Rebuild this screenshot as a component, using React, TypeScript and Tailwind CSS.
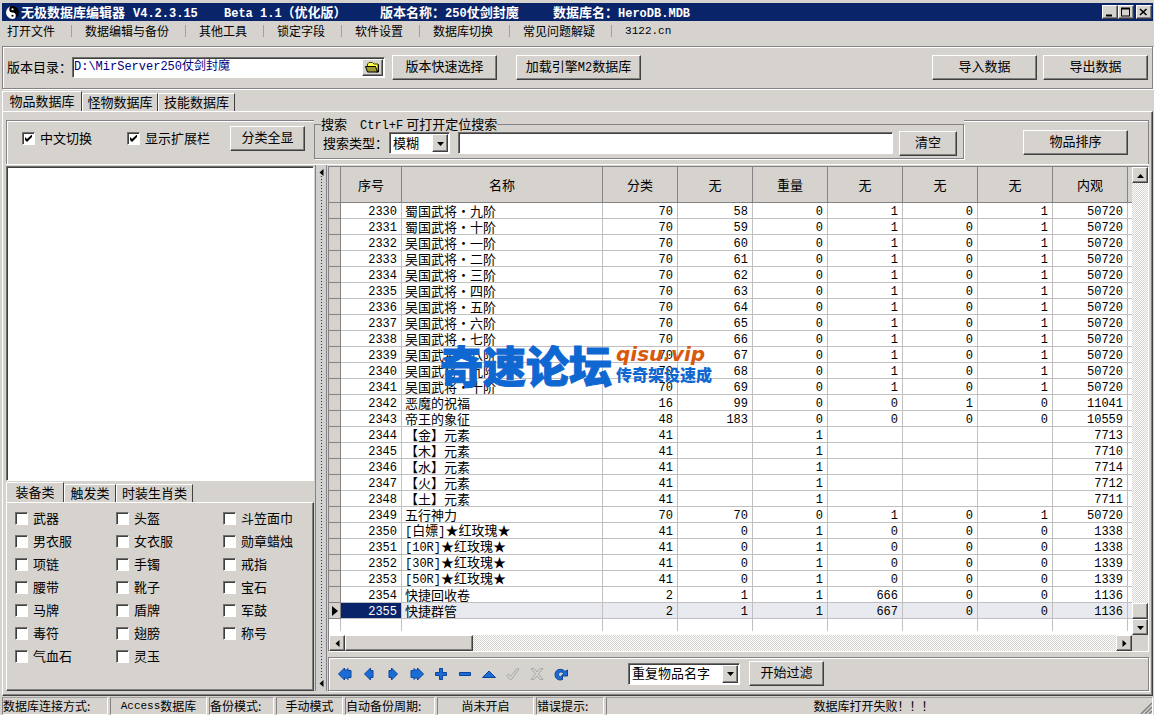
import type { ButtonHTMLAttributes, ReactNode } from 'react'
import clsx from 'clsx'

const RAISED =
  'border border-t-white border-l-white border-r-[#404040] border-b-[#404040] shadow-[inset_-1px_-1px_0_#808080]'
const SUNKEN =
  'border border-t-[#707070] border-l-[#707070] border-r-white border-b-white shadow-[inset_1px_1px_0_#404040]'
const ETCHED = 'border border-[#848284] shadow-[inset_1px_1px_0_#fff,1px_1px_0_#fff]'
const DITHER =
  'bg-[repeating-conic-gradient(#ffffff_0_25%,#d6d3ce_0_50%)] bg-[length:2px_2px]'

const MENU = [
  '打开文件',
  '数据编辑与备份',
  '其他工具',
  '锁定字段',
  '软件设置',
  '数据库切换',
  '常见问题解疑',
  '3122.cn',
]

const HEADERS = ['序号', '名称', '分类', '无', '重量', '无', '无', '无', '内观']

const ROWS: string[][] = [
  ['2330', '蜀国武将·九阶', '70', '58', '0', '1', '0', '1', '50720'],
  ['2331', '蜀国武将·十阶', '70', '59', '0', '1', '0', '1', '50720'],
  ['2332', '吴国武将·一阶', '70', '60', '0', '1', '0', '1', '50720'],
  ['2333', '吴国武将·二阶', '70', '61', '0', '1', '0', '1', '50720'],
  ['2334', '吴国武将·三阶', '70', '62', '0', '1', '0', '1', '50720'],
  ['2335', '吴国武将·四阶', '70', '63', '0', '1', '0', '1', '50720'],
  ['2336', '吴国武将·五阶', '70', '64', '0', '1', '0', '1', '50720'],
  ['2337', '吴国武将·六阶', '70', '65', '0', '1', '0', '1', '50720'],
  ['2338', '吴国武将·七阶', '70', '66', '0', '1', '0', '1', '50720'],
  ['2339', '吴国武将·八阶', '70', '67', '0', '1', '0', '1', '50720'],
  ['2340', '吴国武将·九阶', '70', '68', '0', '1', '0', '1', '50720'],
  ['2341', '吴国武将·十阶', '70', '69', '0', '1', '0', '1', '50720'],
  ['2342', '恶魔的祝福', '16', '99', '0', '0', '1', '0', '11041'],
  ['2343', '帝王的象征', '48', '183', '0', '0', '0', '0', '10559'],
  ['2344', '【金】元素', '41', '', '1', '', '', '', '7713'],
  ['2345', '【木】元素', '41', '', '1', '', '', '', '7710'],
  ['2346', '【水】元素', '41', '', '1', '', '', '', '7714'],
  ['2347', '【火】元素', '41', '', '1', '', '', '', '7712'],
  ['2348', '【土】元素', '41', '', '1', '', '', '', '7711'],
  ['2349', '五行神力', '70', '70', '0', '1', '0', '1', '50720'],
  ['2350', '[白嫖]★红玫瑰★', '41', '0', '1', '0', '0', '0', '1338'],
  ['2351', '[10R]★红玫瑰★', '41', '0', '1', '0', '0', '0', '1338'],
  ['2352', '[30R]★红玫瑰★', '41', '0', '1', '0', '0', '0', '1339'],
  ['2353', '[50R]★红玫瑰★', '41', '0', '1', '0', '0', '0', '1339'],
  ['2354', '快捷回收卷', '2', '1', '1', '666', '0', '0', '1136'],
  ['2355', '快捷群管', '2', '1', '1', '667', '0', '0', '1136'],
]
const CURRENT = '2355'

const CATEGORIES = [
  '武器', '头盔', '斗笠面巾',
  '男衣服', '女衣服', '勋章蜡烛',
  '项链', '手镯', '戒指',
  '腰带', '靴子', '宝石',
  '马牌', '盾牌', '军鼓',
  '毒符', '翅膀', '称号',
  '气血石', '灵玉',
]

const NAV_ICONS: { name: string; d: string; off?: boolean }[] = [
  { name: '首条', d: 'M1.500 8 7.500 2v2h2l1.500-1.500V4.500h3v7h-3v2L9.500 12h-2v2Z' },
  { name: '上一条', d: 'M3.500 8 9.500 2v2.500h2.500v7H9.500V14Z' },
  { name: '下一条', d: 'M12.500 8 6.500 2v2.500H4v7h2.500V14Z' },
  { name: '末条', d: 'M14.500 8 8.500 2v2h-2L5 2.500V4.500H2v7h3v2L6.500 12h2v2Z' },
  { name: '新增', d: 'M6.500 2.500h3v4h4v3h-4v4h-3v-4h-4v-3h4Z' },
  { name: '删除', d: 'M2.500 6.500h11v3h-11Z' },
  { name: '编辑', d: 'M1.500 11.500 8 5l6.500 6.500Z' },
  { name: '保存', d: 'M1.500 9.500 3.500 8l2 2.500L12.500 2l1.500 1L6.500 13.500H5Z', off: true },
  {
    name: '取消',
    d: 'M2 2.500h3l3 3.500 3-3.500h3L9.500 8l4.500 5.500h-3L8 10l-3 3.500H2L6.500 8Z',
    off: true,
  },
  {
    name: '刷新',
    d: 'M14.500 4v6h-6l2-2.500C9 5 5.500 6 5.500 8.500c0 2 2 3 4 2v3C5.500 15 2 12.500 2 8.500 2 3.500 8.500 1.500 12 5.500Z',
  },
]

/** Half-width runs are set in the narrower mono face. */
function Mixed({ children }: { children: string }) {
  return (
    <>
      {children.split(/([!-~]+(?: [!-~]+)*)/).map((part, i) =>
        i % 2 ? (
          <span key={i} className="font-['Liberation_Mono',monospace] text-[12px] leading-none">
            {part}
          </span>
        ) : (
          part
        ),
      )}
    </>
  )
}

function Button({ className, children, ...rest }: ButtonHTMLAttributes<HTMLButtonElement>) {
  return (
    <button
      type="button"
      className={clsx(
        RAISED,
        'flex h-[25px] shrink-0 items-center justify-center bg-[#d6d3ce] pb-[3px] whitespace-nowrap',
        className,
      )}
      {...rest}
    >
      {children}
    </button>
  )
}

function Arrow({ dir }: { dir: 'up' | 'down' | 'left' | 'right' }) {
  const d = {
    up: 'M0 6h7L3.500 2Z',
    down: 'M0 2h7L3.500 6Z',
    left: 'M5.500 0v7L1.500 3.500Z',
    right: 'M1.500 0v7l4-3.500Z',
  }[dir]
  return (
    <svg viewBox="0 0 7 7" className="size-[7px]" aria-hidden="true">
      <path d={d} fill="#000" />
    </svg>
  )
}

function ScrollButton({ dir, label }: { dir: 'up' | 'down' | 'left' | 'right'; label: string }) {
  return (
    <button
      type="button"
      aria-label={label}
      className={clsx(RAISED, 'flex size-4 shrink-0 items-center justify-center bg-[#d6d3ce]')}
    >
      <Arrow dir={dir} />
    </button>
  )
}

function Check({ label, checked }: { label: string; checked?: boolean }) {
  return (
    <label className="flex items-center gap-[5px] whitespace-nowrap">
      <span className="grid size-[13px] shrink-0 place-items-center">
        <input
          type="checkbox"
          defaultChecked={checked}
          className={clsx(
            SUNKEN,
            'peer col-start-1 row-start-1 size-[13px] appearance-none bg-white',
          )}
        />
        <svg
          viewBox="0 0 7 7"
          className="pointer-events-none invisible col-start-1 row-start-1 size-[7px] peer-checked:visible"
          aria-hidden="true"
        >
          <path d="M0 2v3l2 2 5-5V-.5L2 4Z" fill="#000" />
        </svg>
      </span>
      <span className="pb-px">{label}</span>
    </label>
  )
}

function Combo({ id, value, label, className }: {
  id: string
  value: string
  label?: string
  className: string
}) {
  return (
    <span className={clsx('grid shrink-0 items-center', className)}>
      <select
        id={id}
        aria-label={label}
        className={clsx(
          SUNKEN,
          'col-start-1 row-start-1 h-full w-full appearance-none bg-white pb-px pl-[3px]',
        )}
      >
        <option>{value}</option>
      </select>
      <span
        className={clsx(
          RAISED,
          'pointer-events-none col-start-1 row-start-1 mr-[2px] flex h-[18px] w-4 items-center justify-center justify-self-end bg-[#d6d3ce]',
        )}
      >
        <Arrow dir="down" />
      </span>
    </span>
  )
}

function Tab({ active, children, className }: {
  active?: boolean
  children: ReactNode
  className?: string
}) {
  return (
    <button
      type="button"
      role="tab"
      aria-selected={!!active}
      className={clsx(
        'flex items-center justify-center border-t border-r border-l border-t-white border-r-[#404040] border-l-white pb-[2px] whitespace-nowrap',
        active ? 'h-[20px]' : 'h-[18px]',
        className,
      )}
    >
      {children}
    </button>
  )
}

function TitleBar() {
  return (
    <header className="flex h-[18px] items-center bg-[#0a246a] pr-px pl-1 font-bold whitespace-pre text-white">
      <svg viewBox="0 0 14 14" className="mr-[2px] size-[13px]" aria-hidden="true">
        <circle cx="7" cy="7" r="7" fill="#000" />
        <path d="M7 0a7 7 0 0 0 0 14 3.500 3.500 0 0 0 0-7 3.500 3.500 0 0 1 0-7Z" fill="#fff" />
        <circle cx="7" cy="3.500" r="1.200" fill="#fff" />
        <circle cx="7" cy="10.500" r="1.200" fill="#000" />
      </svg>
      <span className="w-28">无极数据库编辑器</span>
      <span className="w-[91px]"><Mixed>V4.2.3.15</Mixed></span>
      <span className="w-[156px]"><Mixed>Beta 1.1（优化版）</Mixed></span>
      <span className="w-[173px]"><Mixed>版本名称：250仗剑封魔</Mixed></span>
      <span className="flex-1"><Mixed>数据库名：HeroDB.MDB</Mixed></span>
      <WindowButton label="最小化">
        <path d="M3 8.500h6v2H3Z" fill="#000" />
      </WindowButton>
      <WindowButton label="最大化">
        <path d="M2 1.500h9v9H2ZM3 3.500v6h7v-6Z" fill="#000" fillRule="evenodd" />
      </WindowButton>
      <WindowButton label="关闭" className="ml-[2px]">
        <path d="M3 3l6.500 6M9.500 3 3 9" stroke="#000" strokeWidth="1.600" />
      </WindowButton>
    </header>
  )
}

function WindowButton({ label, className, children }: {
  label: string
  className?: string
  children: ReactNode
}) {
  return (
    <button
      type="button"
      aria-label={label}
      className={clsx(RAISED, 'h-[14px] w-4 bg-[#d6d3ce]', className)}
    >
      <svg viewBox="0 0 13 12" className="h-3 w-[13px]" aria-hidden="true">
        {children}
      </svg>
    </button>
  )
}

function MenuBar() {
  return (
    <nav className="flex h-6 items-center pb-1 pl-[5px] text-[12px]">
      {MENU.map((item, i) => (
        <div key={item} className="flex items-center">
          {i > 0 && <span className="mr-[13px] ml-4 h-3 w-px bg-[#a0a0a0]" />}
          <button
            type="button"
            className={clsx(
              'whitespace-nowrap',
              item === '3122.cn' && "font-['Liberation_Mono',monospace] text-[11px]",
            )}
          >
            {item}
          </button>
        </div>
      ))}
    </nav>
  )
}

function SourceBar() {
  return (
    <section className={clsx(ETCHED, 'mt-px flex h-[43px] items-center pr-1 pb-px pl-1')}>
      <label htmlFor="dir" className="w-[65px] shrink-0 whitespace-nowrap">版本目录：</label>
      <div className={clsx(SUNKEN, 'flex h-[21px] w-[313px] shrink-0 bg-white p-px')}>
        <input
          id="dir"
          defaultValue="D:\MirServer250仗剑封魔"
          className="min-w-0 flex-1 font-['Liberation_Mono','Noto_Sans_CJK_SC',monospace] text-[12px] text-[#000080] outline-none"
        />
        <button
          type="button"
          aria-label="浏览"
          className={clsx(RAISED, 'flex w-[21px] items-center justify-center bg-[#d6d3ce]')}
        >
          <svg viewBox="0 0 15 12" className="h-3 w-[15px]" aria-hidden="true">
            <path d="M2.500 10V3L4 1.500h3.500L9 3h4v7Z" fill="#ffff4a" stroke="#404000" />
            <path d="M.5 5.500h10l2 5.500h-10Z" fill="#9c9a31" stroke="#000" />
            <path d="M13.500 3.500v7.500h-2" fill="none" stroke="#000" />
          </svg>
        </button>
      </div>
      <Button className="ml-[7px] w-[105px]">版本快速选择</Button>
      <Button className="mr-auto ml-[19px] w-[125px]"><span><Mixed>加载引擎M2数据库</Mixed></span></Button>
      <Button className="mr-[6px] w-[105px]">导入数据</Button>
      <Button className="w-[105px]">导出数据</Button>
    </section>
  )
}

function FilterBar() {
  return (
    <div className="flex h-12 border-b border-white">
      <div className="mt-[3px] flex w-[308px] shrink-0 items-start border-t border-l border-[#848284] pt-[5px] pl-[15px] shadow-[inset_1px_1px_0_#fff]">
        <div className="flex h-[25px] items-center">
          <Check label="中文切换" checked />
        </div>
        <div className="ml-[35px] flex h-[25px] items-center">
          <Check label="显示扩展栏" checked />
        </div>
        <Button className="ml-5 w-[75px]">分类全显</Button>
      </div>
      <fieldset className="h-[42px] min-w-0 flex-1 border border-[#848284] pr-[6px] pl-[6px] shadow-[1px_1px_0_#fff]">
        <legend className="h-[14px] leading-[14px] whitespace-pre">
          <Mixed>{'搜索　Ctrl+F'}</Mixed> 可打开定位搜索
        </legend>
        <div className="flex h-6 items-center">
          <label htmlFor="mode" className="ml-[2px] w-[66px] shrink-0 whitespace-nowrap">
            搜索类型：
          </label>
          <Combo id="mode" value="模糊" className="h-[22px] w-[61px]" />
          <input
            type="text"
            aria-label="搜索"
            className={clsx(SUNKEN, 'mr-[6px] ml-2 h-[22px] min-w-0 flex-1 bg-white px-1')}
          />
          <Button className="w-[58px]">清空</Button>
        </div>
      </fieldset>
      <div className="mt-[3px] flex w-[185px] shrink-0 items-start justify-end border-t border-r border-[#848284] pt-[9px] pr-5 shadow-[inset_0_1px_0_#fff]">
        <Button className="w-[105px]">物品排序</Button>
      </div>
    </div>
  )
}

function CategoryPanel() {
  return (
    <aside className="flex w-[308px] shrink-0 flex-col">
      <div className={clsx(SUNKEN, 'mt-px flex-1 bg-white')} />
      <div role="tablist" className="mt-px flex h-[20px] items-end">
        <Tab active className="w-[58px]">装备类</Tab>
        <Tab className="w-[52px]">触发类</Tab>
        <Tab className="w-[77px]">时装生肖类</Tab>
      </div>
      <div className="grid h-[189px] grid-cols-[101px_107px_1fr] content-start border border-t-white border-r-[#404040] border-b-[#404040] border-l-white pt-[4px] pl-2 shadow-[inset_-1px_-1px_0_#808080]">
        {CATEGORIES.map((c) => (
          <div key={c} className="flex h-[23px] items-center">
            <Check label={c} />
          </div>
        ))}
      </div>
    </aside>
  )
}

function Splitter() {
  return (
    <div className="mx-px flex w-3 shrink-0 flex-col items-center border-r border-l border-[#848284] bg-[#d0d0d0] py-1">
      <Arrow dir="left" />
      <span className="w-px flex-1 bg-[repeating-linear-gradient(#303050_0_1px,transparent_1px_3px)]" />
      <Arrow dir="left" />
    </div>
  )
}

function Watermark() {
  return (
    <div className="pointer-events-none absolute top-[173px] left-[111px] flex items-center font-black whitespace-nowrap text-[#0f67d2]">
      <span className="text-[43px] leading-[48px] [-webkit-text-stroke:1px_#0f67d2]">奇速论坛</span>
      <span className="ml-1 flex flex-col text-[16px] leading-[20px]">
        <span className="font-['DejaVu_Sans',sans-serif] text-[20px] font-bold text-[#d9590b] italic">
          qisu.vip
        </span>
        传奇架设速成
      </span>
    </div>
  )
}

function ItemTable() {
  return (
    <table className="w-full table-fixed border-separate border-spacing-0 bg-white">
      <colgroup>
        <col className="w-3" />
        <col className="w-[61px]" />
        <col className="w-[201px]" />
        <col className="w-[75px]" />
        <col className="w-[75px]" />
        <col className="w-[75px]" />
        <col className="w-[75px]" />
        <col className="w-[75px]" />
        <col className="w-[75px]" />
        <col className="w-[75px]" />
        <col />
      </colgroup>
      <thead>
        <tr className="h-9 bg-[#d6d3ce]">
          <th className="border-r border-b border-[#848284] p-0" />
          {HEADERS.map((h, i) => (
            <th key={i} className="border-r border-b border-[#848284] p-0 font-normal">
              {h}
            </th>
          ))}
          <th className="border-b border-[#848284] p-0" />
        </tr>
      </thead>
      <tbody>
        {ROWS.map((row) => {
          const current = row[0] === CURRENT
          return (
            <tr key={row[0]} className={clsx('h-4 leading-[14px]', current && 'bg-[#e8eaef]')}>
              <td className="border-r border-b border-[#848284] bg-[#d6d3ce] p-0">
                {current && (
                  <svg viewBox="0 0 6 10" className="mx-auto h-[10px] w-[6px]" aria-hidden="true">
                    <path d="M0 0v10l6-5Z" fill="#000" />
                  </svg>
                )}
              </td>
              {row.map((value, i) => (
                <td
                  key={i}
                  className={clsx(
                    'border-r border-b border-[#c0c0c0] p-0 whitespace-nowrap',
                    i === 1 ? 'pl-[3px]' : 'pr-1 text-right',
                    current && i === 0 && 'bg-[#0a246a] text-white',
                  )}
                >
                  <Mixed>{value}</Mixed>
                </td>
              ))}
              <td className="border-b border-[#c0c0c0] p-0" />
            </tr>
          )
        })}
        <tr className="h-3">
          <td className="border-r border-[#c0c0c0] p-0" />
          {HEADERS.map((_, i) => (
            <td key={i} className="border-r border-[#c0c0c0] p-0" />
          ))}
          <td className="p-0" />
        </tr>
      </tbody>
    </table>
  )
}

function Grid() {
  return (
    <div className="relative mt-px flex flex-1 border border-t-[#848284] border-r-white border-b-white border-l-[#848284]">
      <div className="flex min-w-0 flex-1 flex-col">
        <div className="flex-1 bg-white">
          <ItemTable />
        </div>
        <div className={clsx(DITHER, 'flex h-4 shrink-0')}>
          <ScrollButton dir="left" label="向左滚动" />
          <span className={clsx(RAISED, 'w-32 bg-[#d6d3ce]')} />
          <span className="flex-1" />
          <ScrollButton dir="right" label="向右滚动" />
        </div>
      </div>
      <div className="flex w-4 shrink-0 flex-col">
        <div className={clsx(DITHER, 'flex flex-1 flex-col')}>
          <ScrollButton dir="up" label="向上滚动" />
          <span className="flex-1" />
          <span className={clsx(RAISED, 'h-4 bg-[#d6d3ce]')} />
          <ScrollButton dir="down" label="向下滚动" />
        </div>
        <span className="h-4" />
      </div>
      <Watermark />
    </div>
  )
}

function Navigator() {
  return (
    <div className={clsx(ETCHED, 'mt-[5px] flex h-[34px] shrink-0 items-center pb-px pl-1')}>
      {NAV_ICONS.map(({ name, d, off }) => (
        <button
          key={name}
          type="button"
          aria-label={name}
          disabled={off}
          className="flex size-6 items-center justify-center"
        >
          <svg
            viewBox="0 0 16 16"
            className="size-4"
            fill={off ? '#d6d3ce' : '#1c6cd8'}
            stroke={off ? '#a8a8a8' : '#0c4499'}
            aria-hidden="true"
          >
            <path d={d} />
          </svg>
        </button>
      ))}
      <Combo id="filter" value="重复物品名字" label="过滤方式" className="ml-[55px] h-[22px] w-28" />
      <Button className="ml-[9px] w-[75px]">开始过滤</Button>
    </div>
  )
}

function StatusCell({ className, children }: { className: string; children: ReactNode }) {
  return (
    <div
      className={clsx(
        'flex items-center border border-t-[#a0a0a0] border-r-white border-b-white border-l-[#848284] whitespace-nowrap',
        className,
      )}
    >
      {children}
    </div>
  )
}

function StatusBar() {
  return (
    <footer className="mt-px flex h-[18px] shrink-0 gap-[2px] text-[12px]">
      <StatusCell className="w-[106px]">数据库连接方式:</StatusCell>
      <StatusCell className="w-[97px] justify-center">
        <span className="font-['Liberation_Mono',monospace] text-[11px]">Access</span>数据库
      </StatusCell>
      <StatusCell className="w-[65px]">备份模式:</StatusCell>
      <StatusCell className="w-[67px] justify-center">手动模式</StatusCell>
      <StatusCell className="w-[90px]">自动备份周期:</StatusCell>
      <StatusCell className="w-[97px] justify-center">尚未开启</StatusCell>
      <StatusCell className="w-[68px]">错误提示:</StatusCell>
      <StatusCell className="flex-1 justify-center">
        <span className="ml-auto">数据库打开失败！！！</span>
        <svg viewBox="0 0 12 12" className="ml-auto size-3 self-end" aria-hidden="true">
          <path d="M1 12 12 1M5 12l7-7M9 12l3-3" stroke="#808080" strokeWidth="1.500" />
        </svg>
      </StatusCell>
    </footer>
  )
}

export default function App() {
  return (
    <div className="flex min-h-screen flex-col bg-[#d6d3ce] pt-[3px] pr-px pl-[2px] font-['Noto_Sans_CJK_SC',sans-serif] text-[13px] leading-4 text-black">
      <TitleBar />
      <MenuBar />
      <SourceBar />
      <div role="tablist" className="mt-[2px] flex h-[20px] items-end">
        <Tab active className="w-20">物品数据库</Tab>
        <Tab className="w-[76px]">怪物数据库</Tab>
        <Tab className="w-[77px]">技能数据库</Tab>
      </div>
      <main className="flex flex-1 flex-col border border-t-white border-r-[#404040] border-b-[#404040] border-l-white px-[3px] pt-[5px] pb-1 shadow-[inset_-1px_-1px_0_#808080]">
        <FilterBar />
        <div className="flex flex-1">
          <CategoryPanel />
          <Splitter />
          <div className="flex min-w-0 flex-1 flex-col">
            <Grid />
            <Navigator />
          </div>
        </div>
      </main>
      <StatusBar />
    </div>
  )
}
